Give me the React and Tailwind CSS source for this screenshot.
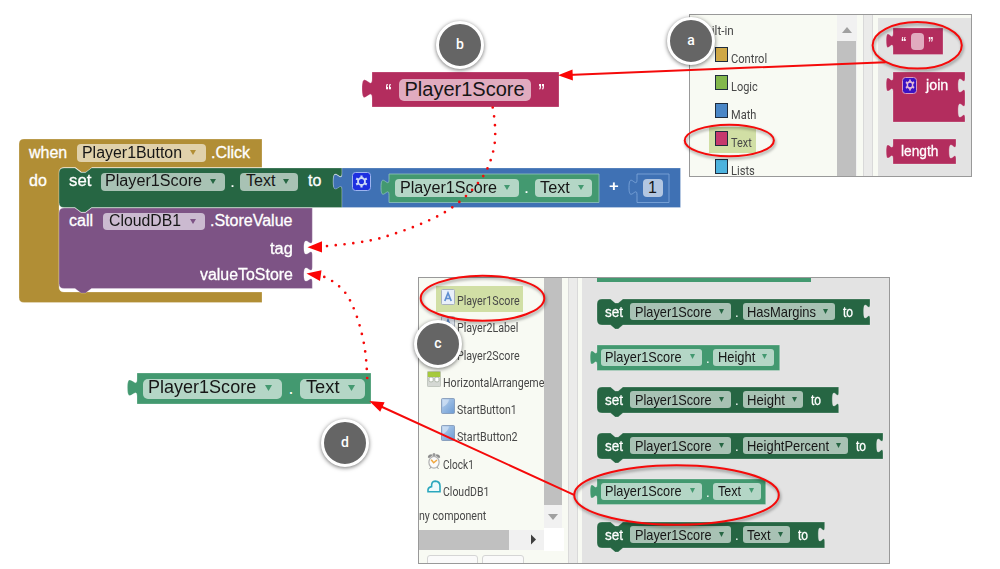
import React, { useLayoutEffect, useRef } from "react";

/* A label stretched or squeezed to the width of its box. */
function Fit({ className = "", children }) {
  const box = useRef(null);
  const text = useRef(null);
  useLayoutEffect(() => {
    const ratio = box.current.getBoundingClientRect().width / text.current.offsetWidth;
    text.current.style.transform = `scaleX(${ratio})`;
  }, []);
  return (
    <span ref={box} className={`block shrink-0 leading-none ${className}`}>
      <span ref={text} className="inline-block origin-left whitespace-nowrap align-top leading-none">
        {children}
      </span>
    </span>
  );
}

function Caret({ className }) {
  return (
    <svg viewBox="0 0 6 5" preserveAspectRatio="none" className={`shrink-0 ${className}`}>
      <path d="M0 0H6L3 5Z" fill="currentColor" />
    </svg>
  );
}

function Field({ className, text, caret, children }) {
  return (
    <span className={`flex shrink-0 items-center ${className}`}>
      <Fit className={`-mt-px text-[#161616] ${text}`}>{children}</Fit>
      {caret && <Caret className={`-mt-px ${caret}`} />}
    </span>
  );
}

/* Puzzle tab and socket outlines, drawn upwards and downwards along an edge. */
const socket = (k, kx = k) => `c0,${10 * k} ${-8 * kx},${-8 * k} ${-8 * kx},${7.5 * k} s${8 * kx},${-2.5 * k} ${8 * kx},${7.5 * k}`;
const tab = (k, kx = k) => `c0,${-10 * k} ${-8 * kx},${8 * k} ${-8 * kx},${-7.5 * k} s${8 * kx},${2.5 * k} ${8 * kx},${-7.5 * k}`;

const valueShape = (w, h, k, kx, sockets = []) =>
  `M0 0H${w}${sockets.map((y) => `V${y}${socket(k, kx)}`).join("")}V${h}H0V${20 * k}${tab(k, kx)}Z`;

const statementShape = (w, h, n, sockets = [], k = 1, kx = 1) => {
  const { x, a, b, d } = n;
  return `M5 0H${x}l${a} ${d}h${b}l${a} ${-d}H${w}${sockets.map((y) => `V${y}${socket(k, kx)}`).join("")}V${h}H${x + 2 * a + b}l${-a} ${d}h${-b}l${-a} ${-d}H5Q0 ${h} 0 ${h - 5}V5Q0 0 5 0Z`;
};
const BIG = { x: 16, a: 6, b: 4.5, d: 4.6 };
const SMALL = { x: 13.5, a: 4.7, b: 3, d: 4 };

function Block({ className, d, fill, stroke = "rgba(255,255,255,.3)", children }) {
  return (
    <div className={`absolute ${className}`}>
      <svg className="absolute inset-0 h-full w-full overflow-visible">
        <path d={d} fill={fill} stroke={stroke} strokeWidth="0.8" />
      </svg>
      {children}
    </div>
  );
}

function Gear({ className, icon }) {
  return (
    <span className={`flex shrink-0 items-center justify-center rounded-[3.5px] border-[1.3px] ${className}`}>
      <svg viewBox="-6 -6 12 12" preserveAspectRatio="none" className={icon} fill="none" stroke="currentColor">
        <circle r="3.2" strokeWidth="1.7" />
        <path d="M0 -3.4V-5.6M0 3.4V5.6M2.9 -1.7L4.9 -2.8M-2.9 1.7L-4.9 2.8M2.9 1.7L4.9 2.8M-2.9 -1.7L-4.9 -2.8" strokeWidth="2" />
      </svg>
    </span>
  );
}

function Badge({ className, children }) {
  return (
    <div
      className={`absolute flex h-[48px] w-[48px] items-center justify-center rounded-full border-[3.5px] border-white bg-[#656565] pb-[1px] font-['Roboto','Liberation_Sans',sans-serif] text-[14px] font-medium text-white shadow-[0_1px_4px_rgba(0,0,0,0.55)] ${className}`}
    >
      {children}
    </div>
  );
}

function Setter({ className, d, field, text, gap, children }) {
  return (
    <Block className={`left-[597px] h-[26px] ${className}`} d={d} fill="#266643">
      <div className="relative flex h-[26px] items-center text-[15px] text-white">
        <Fit className="-mt-[2px] ml-[8px] w-[18px] [-webkit-text-stroke:0.3px_white]">set</Fit>
        <Field className="-mt-px ml-[7px] h-[17px] w-[100.5px] rounded-[3px] bg-[#a8c2b4] pl-[5px] text-[#266643]" text="w-[76.5px]" caret="ml-[7px] h-[5px] w-[5px]">
          Player1Score
        </Field>
        <Fit className="-mt-[1px] ml-[4.5px] w-[3.5px]">.</Fit>
        <Field className={`-mt-px ml-[4px] h-[17px] rounded-[3px] bg-[#a8c2b4] pl-[4.5px] text-[#266643] ${field}`} text={text} caret={`h-[5px] w-[5px] ${gap}`}>
          {children}
        </Field>
        <Fit className="-mt-[2px] ml-[8px] w-[10.5px] [-webkit-text-stroke:0.3px_white]">to</Fit>
      </div>
    </Block>
  );
}

function Getter({ className, d, field, text, children }) {
  return (
    <Block className={`left-[597px] h-[25.5px] ${className}`} d={d} fill="#439970">
      <div className="relative flex h-[25.5px] items-center text-[15px] text-white">
        <Field className="-mt-px ml-[4px] h-[17px] w-[100.5px] rounded-[3px] bg-[#b4d6c6] pl-[4px] text-[#439970]" text="w-[76.5px]" caret="ml-[8px] h-[5px] w-[5px]">
          Player1Score
        </Field>
        <Fit className="-mt-[1px] ml-[4.5px] w-[3.5px]">.</Fit>
        <Field className={`-mt-px ml-[3.5px] h-[17px] rounded-[3px] bg-[#b4d6c6] pl-[5px] text-[#439970] ${field}`} text={text} caret="ml-[7px] h-[5px] w-[5px]">
          {children}
        </Field>
      </div>
    </Block>
  );
}

function Category({ color, width, active, children }) {
  return (
    <div className={`ml-[19px] flex h-[28px] w-[47px] shrink-0 ${active ? "bg-[linear-gradient(#d1dfa5,#d1dfa5)] bg-[length:47px_26px] bg-no-repeat" : ""}`}>
      <span className={`ml-[6px] mt-[4px] h-[15px] w-[13px] shrink-0 border-[1.5px] border-[#1f2c3d] ${color}`} />
      <Fit className={`ml-[3px] mt-[9px] text-[13px] ${width}`}>{children}</Fit>
    </div>
  );
}

function ToolboxPanel() {
  return (
    <div className="absolute left-[689px] top-[14px] flex h-[163px] w-[283px] overflow-hidden border border-[#999] bg-[#f8faf3] font-['Roboto','Liberation_Sans',sans-serif] text-[#484848]">
      <div className="flex w-[147px] shrink-0 flex-col">
        <Fit className="mb-[6px] ml-[8px] mt-[9px] h-[13px] w-[36px] text-[13px]">Built-in</Fit>
        <div className="flex flex-col">
          <Category color="bg-[#cfa846]" width="w-[36px]">Control</Category>
          <Category color="bg-[#82b74b]" width="w-[27px]">Logic</Category>
          <Category color="bg-[#4a86c6]" width="w-[25.5px]">Math</Category>
          <Category color="bg-[#c6386d]" width="w-[21px]" active>Text</Category>
          <Category color="bg-[#4db3de]" width="w-[24px]">Lists</Category>
        </div>
      </div>
      <div className="flex w-[20px] shrink-0 flex-col bg-[#f1f1f1]">
        <div className="flex h-[26px] items-center justify-center pt-[4px] text-[#a0a0a0]">
          <Caret className="h-[6px] w-[10px] rotate-180" />
        </div>
        <div className="w-[19px] grow bg-[#c0c0c0]" />
      </div>
      <div className="ml-[6px] w-[10px] shrink-0 border-x border-[#d9d9d9] bg-[#ebebea]" />
      <div className="ml-[5px] mt-[3px] grow bg-[#e3e3e3]" />
    </div>
  );
}

function TreeRow({ indent, icon, width, active, children }) {
  return (
    <div className={`flex h-[27.3px] shrink-0 ${indent}`}>
      <div className={`flex h-[26px] ${active ? "w-[87px] shrink-0 bg-[#d1dfa5] pl-[5px]" : ""}`}>
        <span className="mt-[3px] h-[16px] w-[14px] shrink-0">{icon}</span>
        <Fit className={`ml-[2px] mt-[8px] text-[13px] ${width}`}>{children}</Fit>
      </div>
    </div>
  );
}

const LabelIcon = () => (
  <svg viewBox="0 0 14 16" className="h-[16px] w-[14px]">
    <rect x="0.5" y="0.5" width="13" height="15" rx="1" fill="#e9f0fa" stroke="#a9b2bf" />
    <path d="M3.8 12L7 4L10.2 12M5 9.5H9" fill="none" stroke="#5f8fd0" strokeWidth="1.7" />
  </svg>
);
const ButtonIcon = () => (
  <svg viewBox="0 0 14 16" className="h-[16px] w-[14px]">
    <defs>
      <linearGradient id="btn" x2="1" y2="1">
        <stop stopColor="#b9d2ee" />
        <stop offset="1" stopColor="#6c9bd3" />
      </linearGradient>
    </defs>
    <rect x="0.5" y="0.5" width="13" height="15" rx="1" fill="url(#btn)" stroke="#7c93b4" strokeWidth="0.8" />
    <path d="M1.5 9V1.5H8Q7 7 1.5 9Z" fill="#d5e4f5" opacity="0.7" />
  </svg>
);
const ArrangementIcon = () => (
  <svg viewBox="0 0 14 16" className="h-[16px] w-[14px]">
    <rect x="0.4" y="0.4" width="13.2" height="15.2" rx="1" fill="#d5d8d4" stroke="#b5bab2" strokeWidth="0.8" />
    <path d="M0.8 0.8H13.2V6H0.8Z" fill="#a6ca3c" />
    <rect x="2.1" y="6.2" width="4" height="4.6" rx="1.2" fill="#fff" stroke="#8e9a88" strokeWidth="0.6" />
    <rect x="7.9" y="6.2" width="4" height="4.6" rx="1.2" fill="#fff" stroke="#8e9a88" strokeWidth="0.6" />
  </svg>
);
const ClockIcon = () => (
  <svg viewBox="0 0 14 17" className="h-[17px] w-[14px]">
    <path d="M0.8 4.2Q1.2 1.2 4.6 1.2L5.2 2.6L2 5.2ZM13.2 4.2Q12.8 1.2 9.4 1.2L8.8 2.6L12 5.2Z" fill="#8d8d8d" />
    <path d="M6 0.8H8V3H6ZM2.5 16L4 14M11.5 16L10 14" fill="#999" stroke="#999" />
    <ellipse cx="7" cy="9.3" rx="5.1" ry="5.9" fill="#fafafa" stroke="#b0b0b0" strokeWidth="1.2" />
    <path d="M4.2 6.7L6.7 9.8L10 7" fill="none" stroke="#f0a63c" strokeWidth="1.5" />
  </svg>
);
const CloudIcon = () => (
  <svg viewBox="0 0 14 13" className="h-[13px] w-[14px]">
    <path d="M1 11.8V9.6Q1.4 7.2 4.6 6.6Q4.2 1.2 8.2 1.1Q13 1.4 13 6V11.8Z" fill="#eefafb" stroke="#2aa7bd" strokeWidth="1.6" />
  </svg>
);

function ComponentPanel() {
  return (
    <div className="absolute left-[418px] top-[277px] flex h-[287px] w-[472px] overflow-hidden border border-[#999] bg-[#f8faf3] font-['Roboto','Liberation_Sans',sans-serif] text-[#484848]">
      <div className="flex w-[145px] shrink-0 flex-col">
        <div className="flex h-[250px]">
          <div className="flex w-[125px] shrink-0 flex-col overflow-hidden pt-[8px]">
            <TreeRow indent="pl-[17px]" width="w-[62.5px]" active icon={<LabelIcon />}>Player1Score</TreeRow>
            <TreeRow indent="pl-[22px]" width="w-[61px]" icon={<LabelIcon />}>Player2Label</TreeRow>
            <TreeRow indent="pl-[22px]" width="w-[62.5px]" icon={<LabelIcon />}>Player2Score</TreeRow>
            <TreeRow indent="pl-[8px]" width="w-[101px]" icon={<ArrangementIcon />}>HorizontalArrangeme</TreeRow>
            <TreeRow indent="pl-[22px]" width="w-[60px]" icon={<ButtonIcon />}>StartButton1</TreeRow>
            <TreeRow indent="pl-[22px]" width="w-[61px]" icon={<ButtonIcon />}>StartButton2</TreeRow>
            <TreeRow indent="pl-[8px]" width="w-[31px]" icon={<ClockIcon />}>Clock1</TreeRow>
            <TreeRow indent="pl-[8px]" width="w-[46px]" icon={<CloudIcon />}>CloudDB1</TreeRow>
            <Fit className="mt-[5px] w-[67px] text-[13px]">ny component</Fit>
          </div>
          <div className="flex w-[18px] shrink-0 flex-col bg-[#f1f1f1]">
            <div className="h-[227px] w-[18px] bg-[#c0c0c0]" />
            <div className="flex h-[23px] items-center justify-center text-[#a0a0a0]">
              <Caret className="h-[6px] w-[10px]" />
            </div>
          </div>
        </div>
        <div className="flex h-[23px] items-center">
          <div className="flex h-[20px] w-[125px] items-center bg-[#f1f1f1]">
            <div className="h-[20px] w-[90px] bg-[#c0c0c0]" />
            <svg viewBox="0 0 5 10" className="ml-[22px] h-[11px] w-[5px]">
              <path d="M0 0L5 5L0 10Z" fill="#3f3f3f" />
            </svg>
          </div>
          <div className="h-[23px] w-[20px] bg-white" />
        </div>
        <div className="mt-[4px] flex gap-[4px] pl-[8px]">
          <div className="h-[20px] w-[51px] rounded-[3px] border border-[#d5d5d5] bg-[#fafafa]" />
          <div className="h-[20px] w-[42px] rounded-[3px] border border-[#d5d5d5] bg-[#fafafa]" />
        </div>
      </div>
      <div className="ml-[4px] w-[10px] shrink-0 border-x border-[#d9d9d9] bg-[#ebebea]" />
      <div className="ml-[4px] grow bg-[#e3e3e3]">
        <div className="ml-[15px] h-[4px] w-[214px] bg-[#439970]" />
      </div>
    </div>
  );
}

function EventStack() {
  return (
    <>
      <Block
        className="left-[19px] top-[139px] h-[164px] w-[243px]"
        d="M5 0H243V28.5H73l-6 4.6h-4.5l-6 -4.6H45Q40 28.5 40 33.5V148Q40 153 45 153H243V163.5H5Q0 163.5 0 158.5V5Q0 0 5 0Z"
        fill="#b18e35"
      >
        <div className="relative flex h-[28px] items-center text-[16px] text-white">
          <Fit className="-mt-px ml-[10px] w-[38px] [-webkit-text-stroke:0.3px_white]">when</Fit>
          <Field className="ml-[10px] h-[18px] w-[128.5px] rounded-[4px] bg-[#e0d1ab] pl-[5px] text-[#b18e35]" text="w-[100.5px]" caret="ml-[7px] h-[5px] w-[6px]">
            Player1Button
          </Field>
          <Fit className="-mt-px ml-[5.5px] w-[39px] [-webkit-text-stroke:0.3px_white]">.Click</Fit>
        </div>
        <div className="relative flex h-[28px] items-center text-[16px] text-white">
          <Fit className="-mt-px ml-[10px] w-[18px] [-webkit-text-stroke:0.3px_white]">do</Fit>
        </div>
      </Block>

      <Block className="left-[59px] top-[208px] h-[81px] w-[253px]" d={statementShape(253.3, 80.5, BIG, [32, 59], 1, 1.05)} fill="#7d5385">
        <div className="relative flex h-[27px] items-center text-[16px] text-white">
          <Fit className="-mt-px ml-[10px] w-[24px] [-webkit-text-stroke:0.3px_white]">call</Fit>
          <Field className="ml-[10px] h-[17.5px] w-[101.5px] rounded-[4px] bg-[#cbbad0] pl-[5.5px] text-[#7d5385]" text="w-[72px]" caret="ml-[9px] h-[5px] w-[6px]">
            CloudDB1
          </Field>
          <Fit className="-mt-px ml-[5.5px] w-[82px] [-webkit-text-stroke:0.3px_white]">.StoreValue</Fit>
        </div>
        <div className="relative flex h-[27px] w-[233px] items-center justify-end text-[16px] text-white">
          <Fit className="w-[22.5px] [-webkit-text-stroke:0.3px_white]">tag</Fit>
        </div>
        <div className="relative flex h-[27px] w-[233px] items-center justify-end text-[16px] text-white">
          <Fit className="-mt-[1px] w-[92.5px] [-webkit-text-stroke:0.3px_white]">valueToStore</Fit>
        </div>
      </Block>

      <Block className="left-[59px] top-[168px] h-[40px] w-[283px]" d={statementShape(283, 39.5, BIG, [5], 1.1, 1.1)} fill="#266643">
        <div className="relative flex h-[27px] items-center text-[16px] text-white">
          <Fit className="-mt-px ml-[10px] w-[22px] [-webkit-text-stroke:0.3px_white]">set</Fit>
          <Field className="ml-[10px] h-[18px] w-[124px] rounded-[4px] bg-[#a8c2b4] pl-[4px] text-[#266643]" text="w-[97px]" caret="ml-[8px] h-[5px] w-[6px]">
            Player1Score
          </Field>
          <Fit className="ml-[5px] w-[4.5px]">.</Fit>
          <Field className="ml-[5.5px] h-[18px] w-[57.5px] rounded-[4px] bg-[#a8c2b4] pl-[6px] text-[#266643]" text="w-[29px]" caret="ml-[8px] h-[5px] w-[6px]">
            Text
          </Field>
          <Fit className="-mt-px ml-[10.5px] w-[13px] [-webkit-text-stroke:0.3px_white]">to</Fit>
        </div>
      </Block>

      <Block className="left-[342px] top-[168px] h-[40px] w-[339px]" d={valueShape(338.5, 39.5, 1.1, 1.1)} fill="#3f71b4">
        <div className="relative flex h-[27px] items-center pl-[10px]">
          <Gear className="h-[19px] w-[19px] border-[#9db4f0] bg-[#1d2fe0] text-[#cdd9f8]" icon="h-[13px] w-[13px]" />
        </div>
      </Block>
      <Block className="left-[389px] top-[174px] h-[29px] w-[210px]" d={valueShape(210, 28.5, 1.06, 1)} fill="#439970" stroke="#8fc3bb">
        <div className="relative flex h-[28px] items-center text-[16px] text-white">
          <Field className="ml-[5.5px] h-[18px] w-[124.5px] rounded-[4px] bg-[#b4d6c6] pl-[5px] text-[#439970]" text="w-[97px]" caret="ml-[7px] h-[5px] w-[6px]">
            Player1Score
          </Field>
          <Fit className="ml-[5px] w-[4.5px]">.</Fit>
          <Field className="ml-[6px] h-[18px] w-[57.5px] rounded-[4px] bg-[#b4d6c6] pl-[5.5px] text-[#439970]" text="w-[29.5px]" caret="ml-[8px] h-[5px] w-[6px]">
            Text
          </Field>
        </div>
      </Block>
      <Fit className="absolute left-[609px] top-[178px] w-[10px] text-[15px] font-bold text-white">+</Fit>
      <Block className="left-[637px] top-[174px] h-[29px] w-[32px]" d={valueShape(32, 28.5, 1.06, 1)} fill="#3f71b4" stroke="#83a9dc">
        <div className="relative flex h-[28px] items-center pl-[6px] text-[16px]">
          <Field className="h-[18px] w-[19.5px] rounded-[4px] bg-[#b2c6e1] pl-[5px]" text="w-[9px]">1</Field>
        </div>
      </Block>
    </>
  );
}

function Annotations() {
  return (
    <svg viewBox="0 0 1000 569" className="pointer-events-none absolute inset-0 h-full w-full" fill="none" stroke="#f50a0a">
      <g strokeWidth="2" className="drop-shadow-[1px_2px_1.5px_rgba(0,0,0,0.4)]">
        <ellipse cx="917.2" cy="45.3" rx="44.6" ry="23.3" />
        <ellipse cx="729.3" cy="140.5" rx="44.6" ry="15.8" />
        <ellipse cx="482.5" cy="298.3" rx="61.8" ry="22.5" />
        <ellipse cx="676.5" cy="495" rx="102.3" ry="29.8" />
      </g>
      <path d="M885.5 62.2L568 74.9M574 494.8L380 406" strokeWidth="2" />
      <g stroke="none" fill="#fb0505">
        <path d="M558 75.3L572.5 69.6L572.9 80.4Z" />
        <path d="M369.3 401L384.6 402.3L380.2 411.8Z" />
        <path d="M307.5 247.2L322 241.3V252.6Z" />
        <path d="M306.5 273.5L321.5 270.3L320 281Z" />
      </g>
      <g strokeWidth="2.7" strokeLinecap="round">
        <path
          strokeDasharray="0 8.85"
          d="M492.7 107.5C496 125 496 142 493 152C489 168 484 176 478 183C466 198 452 209 437 216.5C418 226 398 233 379 238.5C364 242 350 244 322 246.5"
        />
        <path strokeDasharray="0 8.9" d="M367.2 378C366.8 368 366.3 360 365 350C362 330 354 302 343 290C336 283 330 279 322 276" />
      </g>
    </svg>
  );
}

export default function App() {
  return (
    <main className="relative h-[569px] w-[1000px] overflow-hidden bg-white font-['Liberation_Sans',Arial,sans-serif]">
      <EventStack />

      <Block className="left-[372px] top-[72px] h-[35px] w-[187px]" d={valueShape(187, 35, 1.33, 1.25)} fill="#b32d5e">
        <div className="relative flex h-[35px] items-center pl-[13px] text-[20px] text-white">
          <Fit className="mt-[2px] w-[7px] text-[18px] font-bold">“</Fit>
          <Field className="ml-[6.5px] h-[22px] w-[132.5px] rounded-[5px] bg-[#e1abbf] pl-[6px]" text="w-[120px]">Player1Score</Field>
          <Fit className="ml-[6.5px] mt-[2px] w-[7px] text-[18px] font-bold">”</Fit>
        </div>
      </Block>

      <Block className="left-[137px] top-[373px] h-[31px] w-[234px]" d={valueShape(234, 31, 1.18, 1.2)} fill="#439970">
        <div className="relative flex h-[31px] items-center text-[17.7px] text-white">
          <Field className="ml-[6px] h-[20px] w-[139px] rounded-[5px] bg-[#b4d6c6] pl-[5px] text-[#439970]" text="w-[108px]" caret="ml-[9px] h-[6px] w-[7px]">
            Player1Score
          </Field>
          <Fit className="ml-[6.5px] w-[5px]">.</Fit>
          <Field className="ml-[6px] h-[20px] w-[65px] rounded-[5px] bg-[#b4d6c6] pl-[6px] text-[#439970]" text="w-[33px]" caret="ml-[9px] h-[6px] w-[7px]">
            Text
          </Field>
        </div>
      </Block>

      <ToolboxPanel />
      <Block className="left-[893px] top-[28px] h-[27px] w-[50px]" d={valueShape(50, 26.5, 1.02, 0.85)} fill="#b32d5e">
        <div className="relative flex h-[27px] items-center pl-[8px] text-[14px] font-bold text-white">
          <Fit className="w-[5.5px]">“</Fit>
          <span className="ml-[4px] h-[17px] w-[13px] rounded-[4px] bg-[#e1abbf]" />
          <Fit className="ml-[4px] w-[5.5px]">”</Fit>
        </div>
      </Block>
      <Block className="left-[893px] top-[72px] h-[50px] w-[72px]" d={valueShape(72, 50, 1, 0.85, [6, 31])} fill="#b32d5e">
        <div className="relative flex h-[26px] items-center pl-[9px] text-[15px] text-white">
          <Gear className="h-[17px] w-[15px] border-[#d99ac0] bg-[#3a12c4] text-[#e6b9d6]" icon="h-[12px] w-[10px]" />
          <Fit className="-mt-[2px] ml-[9px] w-[22px] [-webkit-text-stroke:0.3px_white]">join</Fit>
        </div>
      </Block>
      <Block className="left-[893px] top-[139px] h-[25px] w-[63px]" d={valueShape(63, 25, 1, 0.85, [5])} fill="#b32d5e">
        <div className="relative flex h-[25px] items-center pl-[8px] text-[15px] text-white">
          <Fit className="-mt-[2px] w-[37.5px] [-webkit-text-stroke:0.3px_white]">length</Fit>
        </div>
      </Block>

      <ComponentPanel />
      <Setter className="top-[299px] w-[273px]" d={statementShape(273, 26, SMALL, [5], 1, 0.8)} field="w-[92px]" text="w-[69px]" gap="ml-[7px]">HasMargins</Setter>
      <Getter className="top-[345px] w-[183px]" d={valueShape(182.7, 25.5, 1, 0.85)} field="w-[61px]" text="w-[37px]">Height</Getter>
      <Setter className="top-[387px] w-[242px]" d={statementShape(241.7, 26, SMALL, [5], 1, 0.8)} field="w-[60.5px]" text="w-[37.5px]" gap="ml-[7px]">Height</Setter>
      <Setter className="top-[433px] w-[286px]" d={statementShape(286, 26, SMALL, [5], 1, 0.8)} field="w-[105px]" text="w-[82px]" gap="ml-[7px]">HeightPercent</Setter>
      <Getter className="top-[479px] w-[169px]" d={valueShape(168.7, 25.5, 1, 0.85)} field="w-[47.5px]" text="w-[23.5px]">Text</Getter>
      <Setter className="top-[522px] w-[228px]" d={statementShape(227.7, 26, SMALL, [5], 1, 0.8)} field="w-[47px]" text="w-[24px]" gap="ml-[7px]">Text</Setter>

      <Annotations />
      <Badge className="left-[667px] top-[17px]">a</Badge>
      <Badge className="left-[436px] top-[21px]">b</Badge>
      <Badge className="left-[414px] top-[320px]">c</Badge>
      <Badge className="left-[321px] top-[419px]">d</Badge>
    </main>
  );
}
